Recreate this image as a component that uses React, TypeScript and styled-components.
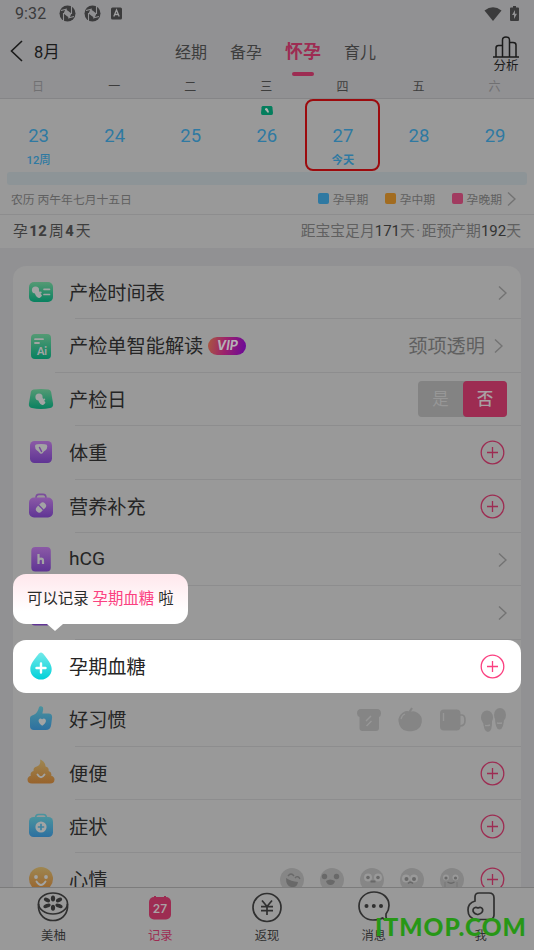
import React from "react";
import styled, { createGlobalStyle, css } from "styled-components";

const color = {
  page: "#919193",
  panel: "#999999",
  line: "#8d8d8e",
  text: "#252525",
  muted: "#606060",
  pink: "#9d2c52",
  blue: "#2f79a2",
};

const Global = createGlobalStyle`
  * { box-sizing: border-box; }
  body { margin: 0; background: ${color.page}; }
`;

const Screen = styled.main`
  position: relative;
  display: flex;
  flex-direction: column;
  width: 534px;
  height: 950px;
  overflow: hidden;
  background: ${color.page};
  color: ${color.text};
  font-family: Roboto, "Noto Sans CJK SC", sans-serif;
  white-space: nowrap;
  svg { display: block; flex: none; }
`;

const StatusBar = styled.header`
  display: flex;
  align-items: center;
  height: 27px;
  padding: 0 15px;
  font-size: 16px;
  color: #3b3b3c;
`;
const Clock = styled.span`
  width: 44px;
  letter-spacing: 0.1px;
`;
const StatusIcons = styled.div<{ $gap: number }>`
  display: flex;
  align-items: center;
  gap: ${(p) => p.$gap}px;
`;
const Spacer = styled.div`
  flex: 1;
`;

const TopNav = styled.nav`
  display: grid;
  grid-template-columns: 175px 1fr 56px;
  height: 50px;
`;
const Back = styled.div`
  display: flex;
  align-items: center;
  gap: 11px;
  height: 48px;
  padding-left: 10px;
  font-size: 16.5px;
  color: #1b1b1b;
`;
const TopTabs = styled.div`
  display: flex;
  gap: 23px;
`;
const TopTab = styled.div<{ $active?: boolean }>`
  display: flex;
  flex-direction: column;
  align-items: center;
  height: 50px;
  font-size: 16px;
  line-height: 51px;
  color: #3d3d3d;
  ${(p) =>
    p.$active &&
    css`
      font-size: 18px;
      font-weight: 700;
      color: ${color.pink};
      line-height: 49px;
      &::after {
        content: "";
        flex: none;
        width: 22px;
        height: 4px;
        margin-top: -4.5px;
        border-radius: 2px;
        background: ${color.pink};
      }
    `}
`;
const Analysis = styled.div`
  display: flex;
  flex-direction: column;
  align-items: center;
  padding-top: 9px;
  font-size: 12.5px;
  line-height: 15px;
  color: #1b1b1b;
`;

const WeekGrid = styled.div`
  display: grid;
  grid-template-columns: repeat(7, 76.1px);
`;
const WeekNames = styled(WeekGrid)`
  height: 22px;
  border-bottom: 1px solid #858587;
  font-size: 12px;
  line-height: 20px;
  text-align: center;
`;
const WeekName = styled.span<{ $weekend: boolean }>`
  color: ${(p) => (p.$weekend ? "#707072" : "#3d3d3d")};
`;

const Calendar = styled.section`
  height: 149px;
  background: ${color.panel};
`;
const Days = styled(WeekGrid)`
  height: 73px;
`;
const Day = styled.div<{ $today?: boolean }>`
  display: grid;
  grid-template-rows: 21px 25px 22px;
  justify-items: center;
  height: 72px;
  padding-top: 1.5px;
  border: 2px solid ${(p) => (p.$today ? "#9c0b0e" : "transparent")};
  border-radius: 8px;
  margin: 0 0 0 1px;
  color: ${color.blue};
`;
const DayMark = styled.div`
  display: flex;
  align-items: center;
  height: 16px;
`;
const DayNumber = styled.span`
  font-size: 18.5px;
  line-height: 24px;
`;
const DayNote = styled.span<{ $strong?: boolean }>`
  font-size: 11.3px;
  line-height: 24px;
  font-weight: ${(p) => (p.$strong ? 700 : 500)};
`;
const Band = styled.div`
  height: 13px;
  margin: 0 7px;
  border-radius: 3px;
  background: #8d9497;
`;
const LunarRow = styled.div`
  display: flex;
  align-items: center;
  height: 30px;
  padding: 0 18px 2px 11px;
  border-bottom: 1px solid ${color.line};
  font-size: 11.8px;
  color: ${color.muted};
`;
const Legend = styled.div`
  display: flex;
  align-items: center;
  gap: 16.5px;
  margin-right: 5px;
`;
const LegendItem = styled.div<{ $color: string }>`
  display: flex;
  align-items: center;
  gap: 4px;
  &::before {
    content: "";
    width: 11px;
    height: 11px;
    border-radius: 2px;
    background: ${(p) => p.$color};
  }
`;
const Summary = styled.div`
  display: flex;
  align-items: center;
  justify-content: space-between;
  height: 29px;
  padding: 0 13px;
  font-size: 14.8px;
  color: ${color.muted};
`;
const Week = styled.span`
  color: #3e3e3e;
  b { letter-spacing: 0.5px; margin: 0 1.5px; font-weight: 800; }
`;
const Countdown = styled.span`
  b { font-weight: 400; color: #333; font-size: 15px; }
`;
const Dot = styled.span`
  margin: 0 1.5px;
`;

const Body = styled.div`
  flex: 1;
  min-height: 0;
  overflow: hidden;
  padding: 18px 13px 0;
`;
const Card = styled.section`
  border-radius: 13px 13px 0 0;
  background: ${color.panel};
`;
const Row = styled.div<{ $inset?: number; $spotlight?: boolean; $end?: number }>`
  position: relative;
  display: grid;
  grid-template-columns: 56px 1fr auto;
  align-items: center;
  height: 53.4px;
  padding-right: ${(p) => p.$end ?? 16}px;
  &::after {
    content: "";
    position: absolute;
    left: ${(p) => p.$inset ?? 62}px;
    right: 0;
    bottom: 0;
    height: 1px;
    background: ${color.line};
  }
  ${(p) =>
    p.$spotlight &&
    css`
      border-radius: 13px;
      background: #fff;
      &::after { display: none; }
    `}
`;
const RowIcon = styled.div`
  display: flex;
  padding: 0 0 1px 13px;
`;
const Label = styled.div`
  display: flex;
  align-items: center;
  gap: 5px;
  height: 50px;
  padding-bottom: 1.4px;
  font-size: 19.2px;
  color: ${color.text};
`;
const Vip = styled.span`
  display: flex;
  align-items: center;
  justify-content: center;
  width: 38px;
  height: 18px;
  margin-top: 1.5px;
  border-radius: 9px;
  background: linear-gradient(100deg, #a9593f 0%, #9c226b 45%, #69079b 100%);
  color: #b5b0b5;
  font: italic 700 12.5px/18px Inter, sans-serif;
`;
const Actions = styled.div<{ $gap?: number }>`
  display: flex;
  align-items: center;
  gap: ${(p) => p.$gap ?? 8}px;
`;
const Value = styled.span`
  padding-bottom: 1.4px;
  font-size: 19.2px;
  color: ${color.muted};
`;
const Toggle = styled.div`
  display: grid;
  grid-template-columns: 45px 44px;
  height: 36px;
  border-radius: 4px;
  background: #838383;
  font-size: 16.5px;
  line-height: 37px;
  text-align: center;
`;
const Choice = styled.span<{ $on?: boolean }>`
  height: 36px;
  border-radius: 4px;
  background: ${(p) => (p.$on ? color.pink : "transparent")};
  color: ${(p) => (p.$on ? "#a9a0a3" : "#979797")};
  font-weight: ${(p) => (p.$on ? 500 : 400)};
`;

const Tip = styled.div`
  position: absolute;
  z-index: 2;
  left: 13px;
  top: 574px;
  width: 175px;
  height: 50px;
  padding-left: 14px;
  border-radius: 13px;
  background: linear-gradient(#ffe7ec, #fff 75%);
  font-size: 15.4px;
  line-height: 50px;
  color: #2b2b2b;
  em { font-style: normal; color: #fb4080; margin: 0 4px; }
  &::after {
    content: "";
    position: absolute;
    left: 34px;
    top: 50px;
    border: 8px solid transparent;
    border-top: 7px solid #fff;
    border-bottom: 0;
  }
`;

const BottomNav = styled.nav`
  display: grid;
  grid-template-columns: repeat(5, 1fr);
  height: 63px;
  border-top: 1px solid #7c7c7c;
  background: ${color.panel};
`;
const NavItem = styled.div<{ $active?: boolean }>`
  display: flex;
  flex-direction: column;
  align-items: center;
  padding-top: 2px;
  font-size: 12.3px;
  line-height: 18px;
  color: ${(p) => (p.$active ? color.pink : "#303030")};
  svg { margin-bottom: 3px; }
`;
const Watermark = styled.div`
  position: absolute;
  z-index: 3;
  left: 375px;
  top: 910px;
  font: 900 24.5px/34px Lato, sans-serif;
  letter-spacing: 1px;
  color: #279716;
`;

const Chevron = () => (
  <svg width="9" height="14" viewBox="0 0 9 14" fill="none" stroke="#737373" strokeWidth="1.4">
    <path d="M1 .5 8 7 1 13.5" />
  </svg>
);

const Plus = ({ bright }: { bright?: boolean }) => (
  <svg width="25" height="25" viewBox="0 0 25 25" fill="none" stroke={bright ? "#fb4080" : color.pink} strokeWidth="1.3">
    <circle cx="12.5" cy="12.5" r="11.3" />
    <path d="M12.5 7v11M7 12.5h11" />
  </svg>
);

const Gradients = () => (
  <svg width="0" height="0" viewBox="0 0 1 1">
    <defs>
      {[
        ["green", "#559a74", "#088160"],
        ["purple", "#8b5aa6", "#5f3494"],
        ["aqua", "#73e9e9", "#00d1d9"],
        ["blue", "#4b939e", "#2d70a0"],
        ["gold", "#9e8751", "#98632c"],
      ].map(([id, from, to]) => (
        <linearGradient key={id} id={id} x1="0" y1="0" x2="0" y2="1">
          <stop offset="0" stopColor={from} />
          <stop offset="1" stopColor={to} />
        </linearGradient>
      ))}
    </defs>
  </svg>
);
const Hidden = styled.div`
  position: absolute;
  width: 0;
  height: 0;
`;

const pale = "#a2a4a4";
const baby = (
  <g fill={pale}>
    <circle cx="12" cy="12" r="3.6" />
    <ellipse cx="14.5" cy="16" rx="2.7" ry="4.2" transform="rotate(-28 14.5 16)" />
    <circle cx="17.2" cy="14.6" r="1" />
    <circle cx="17.3" cy="17.6" r="1.1" />
  </g>
);

const glyphs: Record<string, React.ReactNode> = {
  schedule: (
    <>
      <rect x="2" y="4" width="24" height="20" rx="5" fill="url(#green)" />
      <g transform="translate(-3.5 0)">{baby}</g>
      <path d="M17 11.3h5.5M17 16.5h5.5" stroke={pale} strokeWidth="1.7" strokeLinecap="round" />
    </>
  ),
  report: (
    <>
      <rect x="4" y="2" width="20" height="25" rx="4" fill="url(#green)" />
      <path d="M8 7.2h8M8 11h4" stroke={pale} strokeWidth="1.8" strokeLinecap="round" />
      <text x="10" y="22.5" fill={pale} fontFamily="Lato" fontWeight="900" fontSize="10.5">Ai</text>
    </>
  ),
  scan: (
    <>
      <path d="M6.5 4.5Q14 3.4 21.5 4.5q2 .2 2.6 2.3l2 12q.5 3.6-3 4.2-9.1 1.9-18.2 0-3.5-.6-3-4.2l2-12q.6-2.1 2.6-2.3Z" fill="url(#green)" />
      {baby}
    </>
  ),
  weight: (
    <>
      <rect x="3" y="3" width="22" height="22" rx="4.5" fill="url(#purple)" />
      <path d="M8 8q0-1.5 2-1.7 4-.6 8 0 2.3.2 2.3 1.900 0 3-2 4.300-1.300.8-2 1.800-2 3-4.300 0-.7-1-2-1.800Q8 11.500 8 8Z" fill={pale} />
      <path d="m12.5 9.500 2 4" stroke="#76459c" strokeWidth="1.5" strokeLinecap="round" />
    </>
  ),
  nutrition: (
    <>
      <path d="M9 6q0-3.600 3-3.600h4q3 0 3 3.600" stroke="#7b4e9b" strokeWidth="1.6" fill="none" />
      <rect x="2" y="5.5" width="24" height="20" rx="5" fill="url(#purple)" />
      <g transform="rotate(-45 14 15.5)">
        <rect x="8.2" y="12.2" width="11.6" height="6.6" rx="3.3" fill={pale} />
        <path d="M14 12v7" stroke="#7142a0" strokeWidth="1.2" />
      </g>
    </>
  ),
  hcg: (
    <>
      <rect x="4.3" y="2" width="19.5" height="24.5" rx="4" fill="url(#purple)" />
      <path d="M11.5 9v10M11.5 15.500q.8-1.800 2.500-1.800 2 0 2 2.200V19" fill="none" stroke={pale} strokeWidth="2.2" />
    </>
  ),
  hidden: <rect x="4" y="2" width="20" height="24.5" rx="4" fill="url(#purple)" />,
  sugar: (
    <>
      <path d="M14 .6c1.200 0 2.100 1 3 2.200 3.200 4.200 7.700 9.200 7.700 14.200 0 6-4.800 10.600-10.700 10.600S3.300 23 3.300 17c0-5 4.500-10 7.700-14.200C11.900 1.600 12.800.6 14 .6Z" fill="url(#aqua)" />
      <path d="M14 11.500v9M9.500 16h9" stroke="#fff" strokeWidth="2.4" strokeLinecap="round" />
    </>
  ),
  habit: (
    <>
      <path d="M3 13q0-2 2-2.500 4-1 6-5.200l1-3q.5-1.600 2.300-1 2.300.7 1.900 3l-.8 4.300h6.100q3.800 0 3.600 3.800l-.9 7q-.6 5.600-5.500 5.600H7q-4 0-4-4Z" fill="url(#blue)" />
      <path d="M15.200 20.800c-6-3.800-3.400-9-.1-6.600 3.400-2.400 6.600 2.800.1 6.600Z" fill={pale} />
    </>
  ),
  stool: (
    <>
      <path d="M13.200 1.500q-.2-1.500 1.200-.5Q18.500 3.600 18.600 7.500q3.600.8 3 4.500 3.600 1 2.600 4.700 3.300.8 3.300 3.900 0 3.900-4.400 3.900H4.900Q.5 24.500.5 20.600q0-3.100 3.300-3.900-1-3.700 2.800-4.700Q6 8.300 9.800 7.400q3.900-1.200 3.400-5.900Z" fill="url(#gold)" />
      <path d="M10.500 15.500q3.500 5.500 7 0" stroke={pale} strokeWidth="1.9" fill="none" strokeLinecap="round" />
    </>
  ),
  symptom: (
    <>
      <path d="M8.500 6.500q0-4 3-4h5q3 0 3 4" stroke="#4b939e" strokeWidth="1.7" fill="none" />
      <rect x="2" y="5" width="24" height="20" rx="4.5" fill="url(#blue)" />
      <circle cx="14" cy="15" r="5.6" fill={pale} />
      <path d="M14 11.800v6.400M10.800 15h6.400" stroke="#3f84a1" strokeWidth="1.7" />
    </>
  ),
  mood: (
    <>
      <circle cx="14" cy="14" r="12" fill="url(#gold)" />
      <circle cx="9" cy="12" r="1.9" fill={pale} />
      <circle cx="19" cy="12" r="1.9" fill={pale} />
      <path d="M9.500 16.500q4.500 7 9 0" stroke={pale} strokeWidth="1.9" fill="none" strokeLinecap="round" />
    </>
  ),
};
const Glyph = ({ name }: { name: string }) => (
  <svg width="30" height="30" viewBox="-1 -1 30 30">{glyphs[name]}</svg>
);

const g = "#858585";
const habitIcons = [
  <><path d="M5 2h16q4 0 4 4.500 0 2.500-2 3.500v11q0 3-3 3H6.500q-3 0-3-3V10Q1 9 1 6.500 1 2 5 2Z" fill={g} /><path d="m10 14 5-5M10.500 19l5-5" stroke="#979797" strokeWidth="1.5" /></>,
  <><path d="M13 5q-3-2-7 .5Q1 9 1.500 14 2.500 23 10 24q3 .6 6 0 7.500-1 8.800-9 .7-6-4-9Q17 3 13 5Z" fill={g} /><path d="m12.500 5 2.500-4" stroke={g} strokeWidth="2" /><path d="M4 12q1-4 4-5" stroke="#979797" strokeWidth="1.3" fill="none" /></>,
  <><rect x="1" y="2.5" width="20.5" height="21" rx="4" fill={g} /><path d="M21 8h2q3 0 3 5.500T21 19" stroke={g} strokeWidth="1.7" fill="none" /><path d="M4.500 6v8" stroke="#979797" strokeWidth="1.3" /></>,
  <><ellipse cx="7" cy="10.5" rx="6" ry="7" fill={g} /><ellipse cx="20" cy="8" rx="6" ry="7" fill={g} /><path d="M3 13h9q.5 12-4 12T3 13ZM15 10h9q0 12.500-4.500 12.500T15 10Z" fill={g} /><path d="M5 18.500q2.500.5 5-.5M17 16q2.500.5 5 0" stroke="#979797" strokeWidth="1.4" fill="none" /></>,
];
const f = "#696969";
const moods = [
  <><path d="M8 8q3-4 6 0M15 10q3-3 5 1" stroke={f} strokeWidth="1.3" fill="none" /><path d="M6 10q5 3.500 12 4-1 6-7 5-5-1-5-9Z" fill={f} /></>,
  <><circle cx="4.5" cy="8.5" r="2.7" fill={f} /><circle cx="16.5" cy="8.5" r="2.7" fill={f} /><path d="M6 13q4-3 9 0-1 4-4.500 4T6 13Z" fill={f} /></>,
  <><circle cx="8" cy="9.5" r="4" fill="#999" /><circle cx="18" cy="9.5" r="4" fill="#999" /><circle cx="8" cy="9.5" r="1.8" fill={f} /><circle cx="18" cy="9.5" r="1.8" fill={f} /><path d="M10.500 13.500h5" stroke={f} strokeWidth="2" /></>,
  <><circle cx="6" cy="10.5" r="4" fill="#999" /><circle cx="14" cy="10.5" r="4" fill="#999" /><circle cx="6.5" cy="11" r="2" fill={f} /><circle cx="14" cy="11" r="2" fill={f} /><path d="M8 15.500q2.500-2.500 5 0" stroke={f} strokeWidth="1.2" fill="none" /></>,
  <><circle cx="6" cy="9.5" r="3" fill="#999" /><circle cx="15.5" cy="9.5" r="3" fill="#999" /><circle cx="6" cy="10" r="1.6" fill={f} /><circle cx="15.5" cy="10" r="1.6" fill={f} /><path d="M7.500 14q3.500 2.500 7 0" stroke={f} strokeWidth="1.4" fill="none" /><path d="M5 14v9M17 14v9" stroke="#7e7e7e" strokeWidth="2" /></>,
];

const Aperture = () => (
  <svg width="17" height="17" viewBox="0 0 17 17">
    <circle cx="8.5" cy="8.5" r="8" fill="#3b3b3c" />
    <path d="m6.500 4 6 4.500-2 4.500-6-4.500Z" fill={color.page} />
    <path d="M2 5.500 8 4M12.500 1v8M15 11.500 9 13M4.500 16V8" stroke={color.page} strokeWidth="1.1" />
  </svg>
);

const days: { n: number; note?: string; mark?: boolean; today?: boolean }[] = [
  { n: 23, note: "12周" }, { n: 24 }, { n: 25 }, { n: 26, mark: true },
  { n: 27, note: "今天", today: true }, { n: 28 }, { n: 29 },
];

export default function App() {
  return (
    <>
      <Global />
      <Screen>
        <Hidden><Gradients /></Hidden>
        <StatusBar>
          <Clock>9:32</Clock>
          <StatusIcons $gap={8}>
            <Aperture />
            <Aperture />
            <svg width="13" height="13" viewBox="0 0 13 13">
              <rect x="2" y=".5" width="11" height="12" rx="1.5" fill="#3b3b3c" />
              <path d="m4.800 9.500 2.700-6.500 2.700 6.500M5.700 7.500h3.600" stroke="#a0a0a1" strokeWidth="1.3" fill="none" />
            </svg>
          </StatusIcons>
          <Spacer />
          <StatusIcons $gap={8}>
            <svg width="18" height="14" viewBox="0 0 18 14"><path d="M.5 3.500Q9-3 17.500 3.500L9 14Z" fill="#3b3b3c" /></svg>
            <svg width="9" height="15" viewBox="0 0 9 15">
              <path d="M3 0h3v1.500h2q1 0 1 1V14q0 1-1 1H1q-1 0-1-1V2.500q0-1 1-1h2Z" fill="#3b3b3c" />
              <path d="M5 4 2 9h2v4l3-5.200H5Z" fill={color.page} />
            </svg>
          </StatusIcons>
        </StatusBar>

        <TopNav>
          <Back>
            <svg width="13" height="22" viewBox="0 0 13 22" fill="none" stroke="#1b1b1b" strokeWidth="1.6"><path d="m12 1-10.500 10L12 21" /></svg>
            8月
          </Back>
          <TopTabs>
            <TopTab>经期</TopTab>
            <TopTab>备孕</TopTab>
            <TopTab $active>怀孕</TopTab>
            <TopTab>育儿</TopTab>
          </TopTabs>
          <Analysis>
            <svg width="26" height="22" viewBox="0 0 26 22" fill="none" stroke="#1b1b1b" strokeWidth="1.5">
              <path d="M0 21h26M3 21V12q0-2.500 2.500-2.500h4M9.500 21V4q0-3 3.500-3t3.500 3v17M16.500 6.500H20q3 0 3 2.500v12" />
            </svg>
            分析
          </Analysis>
        </TopNav>

        <WeekNames>
          {[..."日一二三四五六"].map((d, i) => <WeekName key={d} $weekend={i % 6 === 0}>{d}</WeekName>)}
        </WeekNames>

        <Calendar>
          <Days>
            {days.map((d) => (
              <Day key={d.n} $today={d.today}>
                <DayMark>
                  {d.mark && (
                    <svg width="12" height="9" viewBox="0 0 12 9">
                      <path d="M2 0h8q1.200 0 1.400 1.200L12 7q0 2-1.500 2h-9Q0 9 0 7L.6 1.200Q.8 0 2 0Z" fill="#047e5d" />
                      <path d="M4 2.800q2-2 3 .7l1 2.500q-1 1.500-2 0L5 4.500q-1.500 0-1-1.700Z" fill="#b0b4b2" />
                    </svg>
                  )}
                </DayMark>
                <DayNumber>{d.n}</DayNumber>
                <DayNote $strong={d.today}>{d.note}</DayNote>
              </Day>
            ))}
          </Days>
          <Band />
          <LunarRow>
            农历 丙午年七月十五日
            <Spacer />
            <Legend>
              <LegendItem $color="#2f79a2">孕早期</LegendItem>
              <LegendItem $color="#a26c20">孕中期</LegendItem>
              <LegendItem $color="#a13b60">孕晚期</LegendItem>
            </Legend>
            <Chevron />
          </LunarRow>
          <Summary>
            <Week>孕<b>12</b>周<b>4</b>天</Week>
            <Countdown>距宝宝足月<b>171</b>天<Dot>·</Dot>距预产期<b>192</b>天</Countdown>
          </Summary>
        </Calendar>

        <Body>
          <Card>
            <Row $end={14}><RowIcon><Glyph name="schedule" /></RowIcon><Label>产检时间表</Label><Chevron /></Row>
            <Row $inset={42} $end={18}>
              <RowIcon><Glyph name="report" /></RowIcon>
              <Label>产检单智能解读<Vip>VIP</Vip></Label>
              <Actions $gap={9}><Value>颈项透明</Value><Chevron /></Actions>
            </Row>
            <Row $end={14}>
              <RowIcon><Glyph name="scan" /></RowIcon><Label>产检日</Label>
              <Toggle><Choice>是</Choice><Choice $on>否</Choice></Toggle>
            </Row>
            <Row><RowIcon><Glyph name="weight" /></RowIcon><Label>体重</Label><Plus /></Row>
            <Row><RowIcon><Glyph name="nutrition" /></RowIcon><Label>营养补充</Label><Plus /></Row>
            <Row $end={14}><RowIcon><Glyph name="hcg" /></RowIcon><Label>hCG</Label><Chevron /></Row>
            <Row $end={14}><RowIcon><Glyph name="hidden" /></RowIcon><Label /><Chevron /></Row>
            <Row $spotlight><RowIcon><Glyph name="sugar" /></RowIcon><Label>孕期血糖</Label><Plus bright /></Row>
            <Row $end={14}>
              <RowIcon><Glyph name="habit" /></RowIcon><Label>好习惯</Label>
              <Actions $gap={14.5}>
                {habitIcons.map((icon, i) => <svg key={i} width="27" height="26" viewBox="0 0 27 26">{icon}</svg>)}
              </Actions>
            </Row>
            <Row><RowIcon><Glyph name="stool" /></RowIcon><Label>便便</Label><Plus /></Row>
            <Row><RowIcon><Glyph name="symptom" /></RowIcon><Label>症状</Label><Plus /></Row>
            <Row>
              <RowIcon><Glyph name="mood" /></RowIcon><Label>心情</Label>
              <Actions $gap={16}>
                {moods.map((face, i) => (
                  <svg key={i} width="24" height="24" viewBox="0 0 24 24"><circle cx="12" cy="12" r="12" fill="#868686" />{face}</svg>
                ))}
                <Plus />
              </Actions>
            </Row>
          </Card>
        </Body>

        <Tip>可以记录<em>孕期血糖</em>啦</Tip>

        <BottomNav>
          <NavItem>
            <svg width="34" height="34" viewBox="0 0 34 34" fill="none" stroke="#303030" strokeWidth="1.7">
              <ellipse cx="17" cy="13.5" rx="14.5" ry="10.5" />
              <path d="M2.500 14v3.500C3 25 9 30.500 17 30.500S31 25 31.500 17.500V14" />
              <g fill="#303030" stroke="none">
                <ellipse cx="17" cy="8.6" rx="2.1" ry="3" /><ellipse cx="17" cy="17.8" rx="2.1" ry="3" />
                <ellipse cx="11" cy="10" rx="3.3" ry="1.9" transform="rotate(28 11 10)" /><ellipse cx="23" cy="10" rx="3.3" ry="1.9" transform="rotate(-28 23 10)" />
                <ellipse cx="11" cy="15.8" rx="3.8" ry="1.9" transform="rotate(-22 11 15.8)" /><ellipse cx="23" cy="15.8" rx="3.8" ry="1.9" transform="rotate(22 23 15.8)" />
              </g>
            </svg>
            美柚
          </NavItem>
          <NavItem $active>
            <svg width="34" height="34" viewBox="0 0 34 34">
              <rect x="6" y="7" width="22" height="22.5" rx="5" fill={color.pink} />
              <path d="M12 6v3M22 6v3" stroke={color.pink} strokeWidth="2" />
              <text x="17" y="23" textAnchor="middle" fontFamily="Inter" fontWeight="600" fontSize="12" fill="#aaa2a5">27</text>
            </svg>
            记录
          </NavItem>
          <NavItem>
            <svg width="34" height="34" viewBox="0 0 34 34" fill="none" stroke="#303030" strokeWidth="1.7">
              <circle cx="17" cy="17.5" r="14" /><path d="m12 10.500 5 6 5-6M17 16v9M11 16.700h12M11 20.700h12" />
            </svg>
            返现
          </NavItem>
          <NavItem>
            <svg width="34" height="34" viewBox="0 0 34 34" fill="none" stroke="#303030" strokeWidth="1.7">
              <path d="M29 24c2-2.500 3-5 3-8.500C32 7.500 25.500 2 17 2S2 8 2 16s6 14 14 14c4 0 7-.5 9.500-2q2 1.700 4.500 2-1.500-3-1-6Z" />
              <g fill="#303030" stroke="none"><circle cx="9.5" cy="16" r="2" /><circle cx="16.8" cy="16" r="2" /><circle cx="24" cy="16" r="2" /></g>
            </svg>
            消息
          </NavItem>
          <NavItem>
            <svg width="34" height="34" viewBox="0 0 34 34" fill="none" stroke="#303030" strokeWidth="1.7">
              <path d="M11 11V7q0-4 4-4h10q5 0 5 5v17q0 4.500-5 4.500H13Q4 29 4 20q0-7 7-9Z" />
              <path d="M13.500 24.500c-7-2-5-9 .5-6.500 5.500-2.500 7 4.500 0 6.500Z" />
            </svg>
            我
          </NavItem>
        </BottomNav>
        <Watermark>ITMOP.COM</Watermark>
      </Screen>
    </>
  );
}
